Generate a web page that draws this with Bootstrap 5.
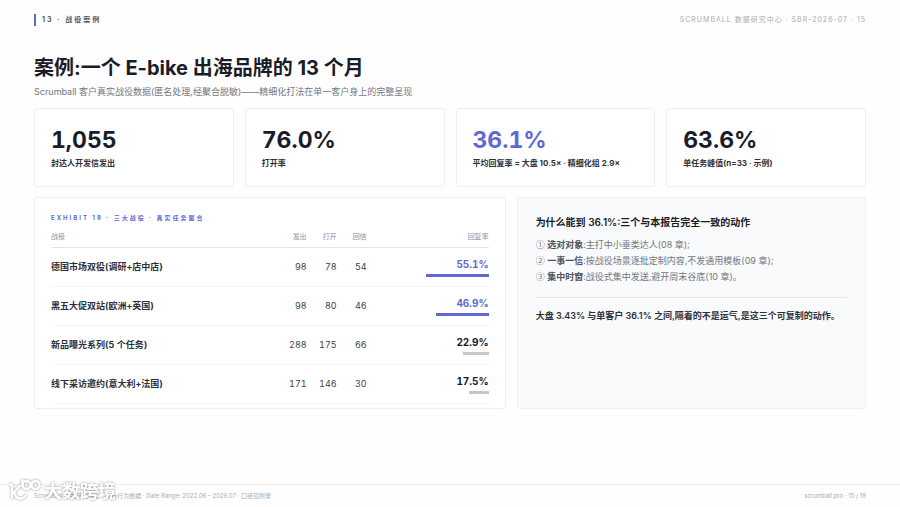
<!DOCTYPE html>
<html lang="zh-CN">
<head>
<meta charset="utf-8">
<meta name="viewport" content="width=device-width, initial-scale=1">
<title>案例:一个 E-bike 出海品牌的 13 个月</title>
<link href="https://cdn.jsdelivr.net/npm/bootstrap@5.3.0/dist/css/bootstrap.min.css" rel="stylesheet">
<style>
:root { --ink: #1a1c29; --accent: #5e6ad2; --muted-ink: #74777f; --faint: #a9acb4; --line: #eeeff2; }
body { font-family: Inter, "Noto Sans CJK SC", sans-serif; font-size: 9px; line-height: 16px; color: var(--ink); background: #fefefe; }
.page-x { padding-left: 34px; padding-right: 34px; }
.topbar { padding-top: 14px; font-size: 7px; line-height: 12px; letter-spacing: 1px; }
.chapter { border-left: 2px solid var(--accent); padding-left: 6px; letter-spacing: 2px; color: #555862; }
.faint { color: var(--faint); }
.headline { margin: 27px 0 0; font-size: 20px; line-height: 30px; font-weight: 700; }
.subtitle { margin: 1px 0 8px; color: var(--muted-ink); }
.panel { border: 1px solid var(--line); border-radius: 3px; background: #fff; }
.stats { --bs-gutter-x: 11px; --bs-gutter-y: 11px; }
.stat { padding: 17px 15px 15px 16px; }
.stat-value { font-size: 23px; line-height: 29px; font-weight: 700; font-variant-numeric: tabular-nums; }
.stat-label { font-size: 8px; line-height: 16px; font-weight: 700; color: #2e313b; }
.accent { color: var(--accent); }
.lower { display: grid; grid-template-columns: 135fr 100fr; gap: 11px; margin-top: 10px; }
.exhibit { padding: 14px 16px 4px; }
.exhibit-title { margin: 0; font-size: 6px; line-height: 12px; font-weight: 700; letter-spacing: 2px; color: var(--accent); }
.tasks { width: 100%; table-layout: fixed; font-variant-numeric: tabular-nums; }
.tasks th, .tasks td { padding: 0; text-align: right; vertical-align: middle; border-bottom: 1px solid #f4f5f7; }
.tasks thead th { height: 23px; padding-top: 3px; font-size: 7px; line-height: 12px; font-weight: 400; color: #8d9098; border-bottom-color: #e4e5e9; }
.tasks tbody > tr > * { height: 39px; }
.tasks th:first-child { text-align: left; }
.tasks tbody th { padding-top: 1px; font-weight: 700; color: #2e313b; }
.tasks td { padding-top: 1px; color: #40434c; }
.c-num { width: 30px; } .c-rate { width: 122px; }
.tasks .rate { padding-top: 2px; font-size: 10px; font-weight: 700; line-height: 12px; color: var(--ink); }
.tasks .rate.top { color: var(--accent); }
.track { width: 113px; height: 3px; margin: 4px 0 0 auto; }
.fill { height: 3px; background: #c6c7ce; }
.top .fill { background: var(--accent); }
.reasons { padding: 16px 18px; background: #f8fafb; }
.reasons h2 { margin: 0 0 7px; font-size: 10px; line-height: 16px; font-weight: 600; }
.reasons ul { color: var(--muted-ink); }
.reasons li { line-height: 16px; }
.reasons strong { font-weight: 600; color: #50535c; }
.ordinal { font-family: "Noto Sans CJK SC", sans-serif; line-height: 1; }
.takeaway { margin: 12px 0 0; padding-top: 10px; border-top: 1px solid #e4e6ea; font-weight: 600; color: #2e313b; }
.footline { border-top: 1px solid var(--line); font-size: 6px; line-height: 22px; }
.watermark { left: 8px; bottom: 4px; }
</style>
</head>
<body class="d-flex flex-column min-vh-100 position-relative">
<header class="topbar page-x d-flex justify-content-between">
  <div class="chapter fw-bold">13 · 战役案例</div>
  <div class="faint">SCRUMBALL 数据研究中心 · SBR-2026-07 · 15</div>
</header>
<main class="page-x">
  <h1 class="headline">案例:一个 E-bike 出海品牌的 13 个月</h1>
  <p class="subtitle">Scrumball 客户真实战役数据(匿名处理,经聚合脱敏)——精细化打法在单一客户身上的完整呈现</p>
  <div class="row row-cols-4 stats">
    <div class="col"><div class="panel stat"><div class="stat-value">1,055</div><div class="stat-label">封达人开发信发出</div></div></div>
    <div class="col"><div class="panel stat"><div class="stat-value">76.0%</div><div class="stat-label">打开率</div></div></div>
    <div class="col"><div class="panel stat"><div class="stat-value accent">36.1%</div><div class="stat-label text-nowrap">平均回复率 = 大盘 10.5× · 精细化组 2.9×</div></div></div>
    <div class="col"><div class="panel stat"><div class="stat-value">63.6%</div><div class="stat-label">单任务峰值(n=33 · 示例)</div></div></div>
  </div>
  <div class="lower">
    <section class="panel exhibit">
      <h2 class="exhibit-title">EXHIBIT 18 · 三大战役 · 真实任务聚合</h2>
      <table class="tasks">
        <colgroup><col><col class="c-num"><col class="c-num"><col class="c-num"><col class="c-rate"></colgroup>
        <thead><tr><th scope="col">战役</th><th scope="col">发出</th><th scope="col">打开</th><th scope="col">回信</th><th scope="col">回复率</th></tr></thead>
        <tbody>
          <tr><th scope="row">德国市场双役(调研+店中店)</th><td>98</td><td>78</td><td>54</td><td class="rate top">55.1%<div class="track"><div class="fill ms-auto" style="width:55.1%"></div></div></td></tr>
          <tr><th scope="row">黑五大促双站(欧洲+英国)</th><td>98</td><td>80</td><td>46</td><td class="rate top">46.9%<div class="track"><div class="fill ms-auto" style="width:46.9%"></div></div></td></tr>
          <tr><th scope="row">新品曝光系列(5 个任务)</th><td>288</td><td>175</td><td>66</td><td class="rate">22.9%<div class="track"><div class="fill ms-auto" style="width:22.9%"></div></div></td></tr>
          <tr><th scope="row">线下采访邀约(意大利+法国)</th><td>171</td><td>146</td><td>30</td><td class="rate">17.5%<div class="track"><div class="fill ms-auto" style="width:17.5%"></div></div></td></tr>
        </tbody>
      </table>
    </section>
    <section class="panel reasons">
      <h2>为什么能到 36.1%:三个与本报告完全一致的动作</h2>
      <ul class="list-unstyled mb-0">
        <li><span class="ordinal">①</span> <strong>选对对象</strong>:主打中小垂类达人(08 章);</li>
        <li><span class="ordinal">②</span> <strong>一事一信</strong>:按战役场景逐批定制内容,不发通用模板(09 章);</li>
        <li><span class="ordinal">③</span> <strong>集中时窗</strong>:战役式集中发送,避开周末谷底(10 章)。</li>
      </ul>
      <p class="takeaway">大盘 3.43% 与单客户 36.1% 之间,隔着的不是运气,是这三个可复制的动作。</p>
    </section>
  </div>
</main>
<footer class="footline faint page-x d-flex justify-content-between mt-auto">
  <span>Scrumball 数据研究中心 · 平台行为数据 · Date Range: 2022.06 – 2026.07 · 口径见附录</span>
  <span>scrumball.pro · 15 / 19</span>
</footer>
<svg class="watermark position-absolute" width="114" height="28" viewBox="0 0 114 28" role="img" aria-label="大数跨境">
  <defs><filter id="halo" x="-10%" y="-20%" width="120%" height="140%"><feDropShadow dx="0" dy="0" stdDeviation="1" flood-color="#777" flood-opacity="0.9"/></filter></defs>
  <g filter="url(#halo)">
    <g fill="none" stroke="#fff" stroke-width="2.4" stroke-linecap="round" stroke-linejoin="round">
      <path d="M2 9.500 H4 V23 M12 11 L6 17 C7 21 9 23.500 12 23.500 C15 23.500 17 22 18 20"/>
      <path d="M14.500 5.500 V10"/><circle cx="18.500" cy="10" r="4"/><circle cx="27.500" cy="10" r="4"/>
    </g>
    <text x="36" y="23" font-size="18" font-weight="700" fill="#fff" font-family="'Noto Sans CJK SC', sans-serif">大数跨境</text>
  </g>
</svg>
<script src="https://cdn.jsdelivr.net/npm/bootstrap@5.3.0/dist/js/bootstrap.bundle.min.js"></script>
</body>
</html>
